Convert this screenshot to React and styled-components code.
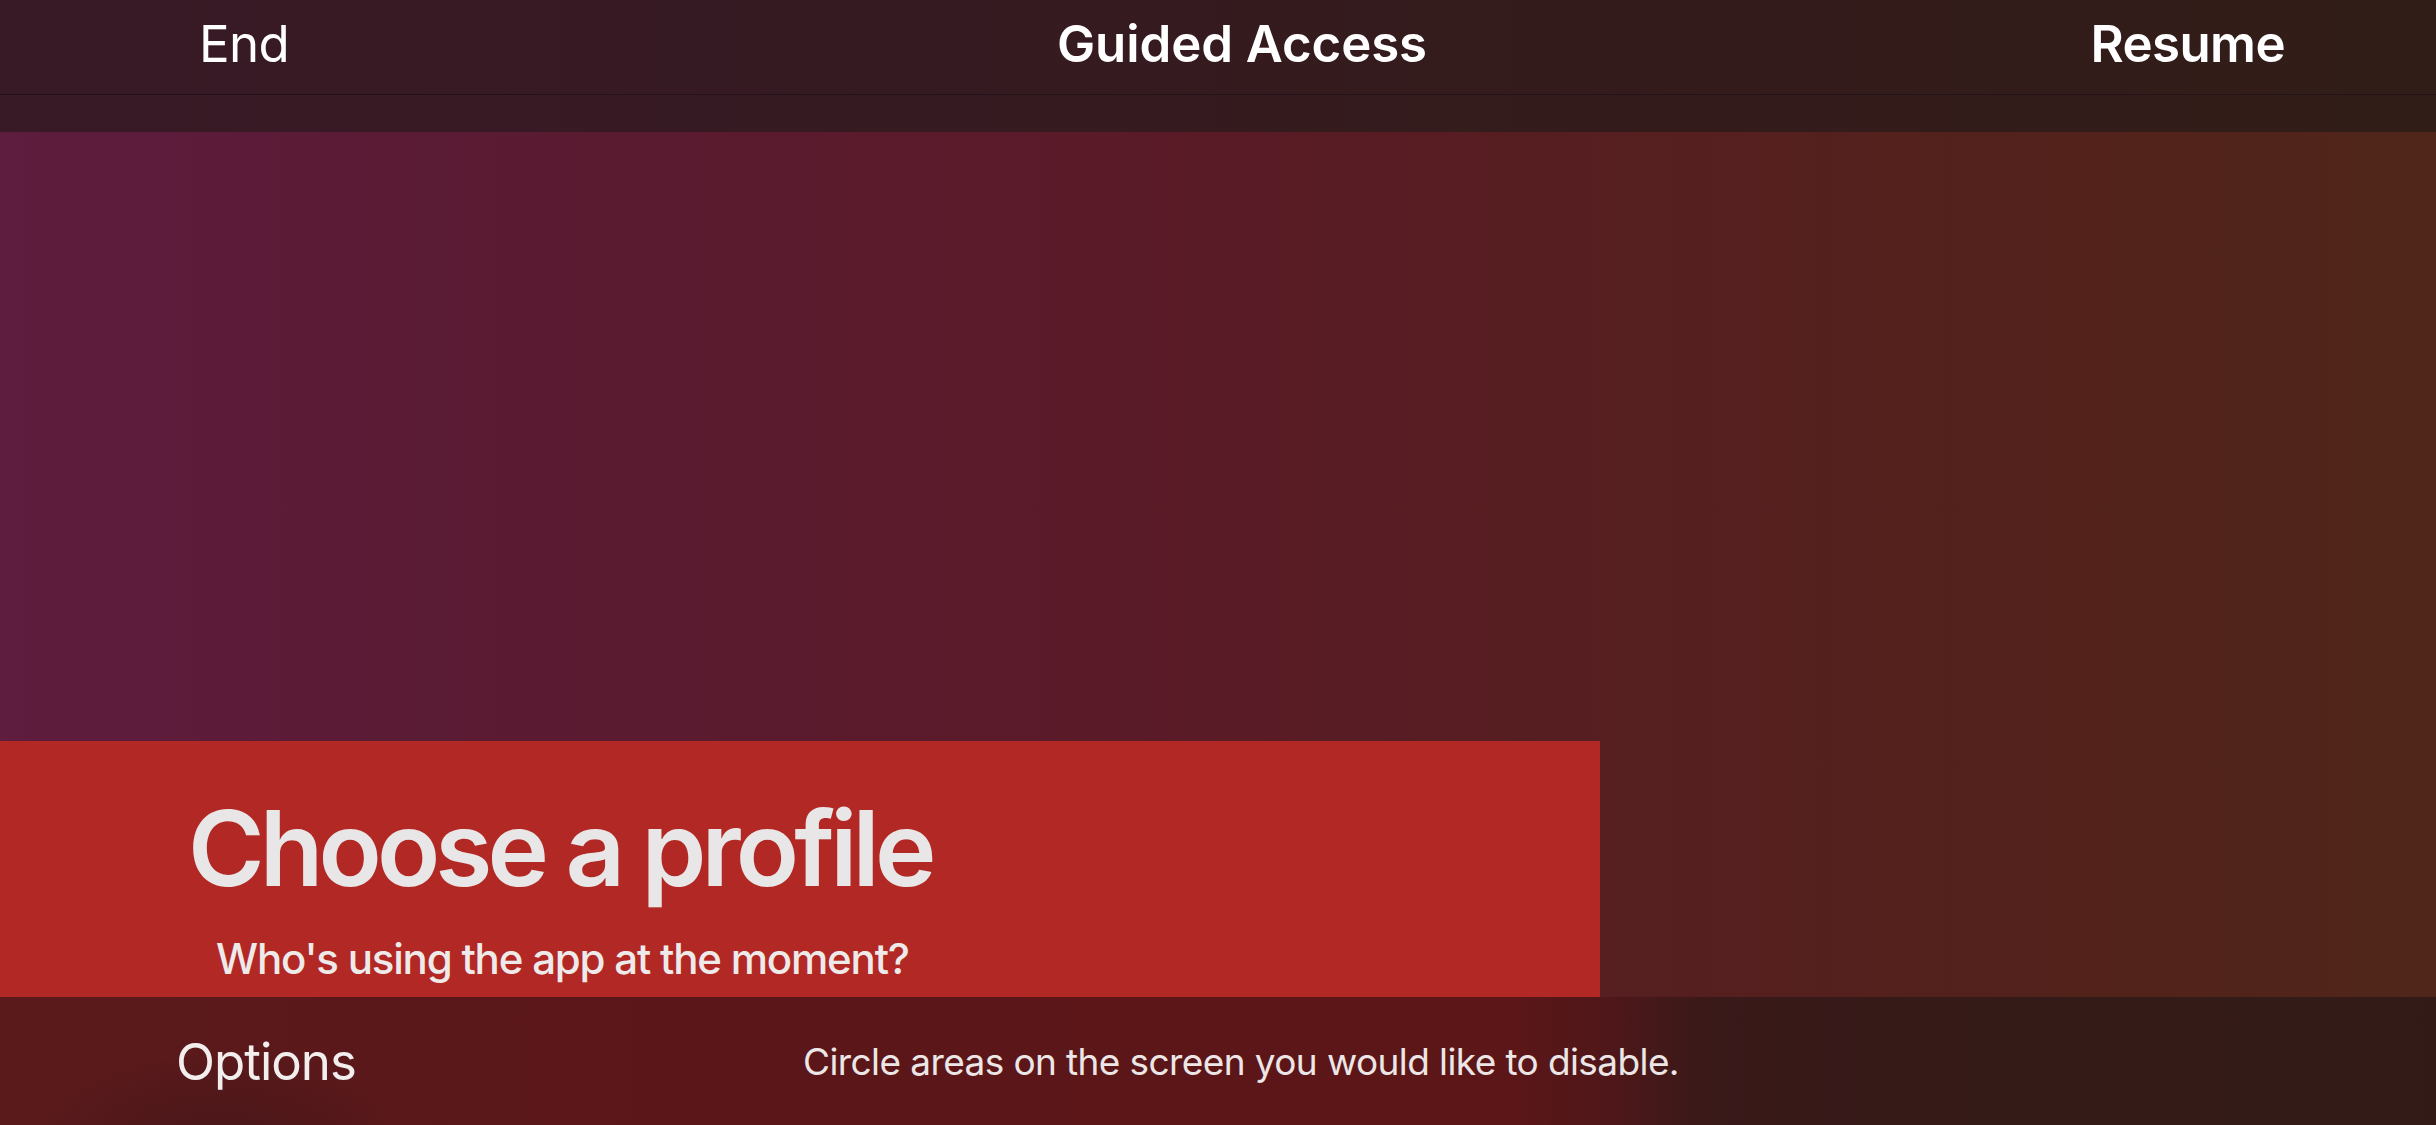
import styled, { createGlobalStyle } from "styled-components";

const GlobalStyle = createGlobalStyle`
    html, body {
        margin: 0;
        padding: 0;
        background: #2f1a1c;
    }
    body {
        font-family: Inter, "Noto Sans", "Liberation Sans", sans-serif;
        -webkit-font-smoothing: antialiased;
    }
`;

const Screen = styled.div`
    width: 2436px;
    height: 1125px;
    overflow: hidden;
    display: flex;
    flex-direction: column;
    background: linear-gradient(90deg, #5e1c3e 0%, #5a1b33 20%, #5a1a28 45%, #561e20 65%, #52221b 85%, #50261a 100%);
`;

const Header = styled.header`
    flex: 0 0 132px;
    display: flex;
    flex-direction: column;
    background: linear-gradient(90deg, #381a26 0%, #361a22 35%, #341b1c 60%, #311d18 100%);
`;

const NavRow = styled.div`
    height: 95px;
    box-sizing: border-box;
    padding: 0 151px 8px 199px;
    border-bottom: 1px solid #24121a;
    display: grid;
    grid-template-columns: 1fr auto 1fr;
    align-items: center;
`;

const NavButton = styled.span`
    font-size: 51px;
    font-weight: ${props => props.bold ? 600 : 400};
    color: #ffffff;
    letter-spacing: -0.6px;
    justify-self: ${props => props.end ? "end" : "start"};
`;

const NavTitle = styled.span`
    font-size: 51px;
    font-weight: 600;
    color: #ffffff;
    letter-spacing: -0.1px;
`;

const Content = styled.main`
    flex: 1;
    display: flex;
    flex-direction: column;
    justify-content: flex-end;
`;

const ProfilePanel = styled.section`
    width: 1600px;
    height: 256px;
    box-sizing: border-box;
    padding: 44px 0 0 188px;
    background: #b22824;
    overflow: hidden;
`;

const Title = styled.h1`
    margin: 0;
    font-size: 104px;
    line-height: 126px;
    font-weight: 600;
    color: #e8e6e6;
    letter-spacing: -4.9px;
`;

const Subtitle = styled.p`
    margin: 23px 0 0 28px;
    font-size: 42px;
    line-height: 50px;
    font-weight: 500;
    color: #eeeaea;
    letter-spacing: -1.2px;
`;

const BottomBar = styled.footer`
    flex: 0 0 128px;
    display: grid;
    grid-template-columns: 1fr auto 1fr;
    align-items: center;
    padding: 0 130px 0 176px;
    background:
        radial-gradient(ellipse 260px 120px at 220px 140px, rgba(40, 20, 20, 0.35), rgba(40, 20, 20, 0) 70%),
        linear-gradient(90deg, #5a1a1c 0%, #5b1619 30%, #5c1618 62%, #4f1719 66%, #3a1919 70%, #351a18 78%, #321b17 100%);
`;

const OptionsButton = styled.span`
    font-size: 51px;
    color: #f2eeee;
    letter-spacing: -1px;
`;

const Hint = styled.span`
    font-size: 37px;
    color: #ece6e6;
    letter-spacing: -0.6px;
`;

export default function App() {
    return (
        <>
            <GlobalStyle />
            <Screen>
                <Header>
                    <NavRow>
                        <NavButton>End</NavButton>
                        <NavTitle>Guided Access</NavTitle>
                        <NavButton bold end>Resume</NavButton>
                    </NavRow>
                </Header>
                <Content>
                    <ProfilePanel>
                        <Title>Choose a profile</Title>
                        <Subtitle>Who's using the app at the moment?</Subtitle>
                    </ProfilePanel>
                </Content>
                <BottomBar>
                    <OptionsButton>Options</OptionsButton>
                    <Hint>Circle areas on the screen you would like to disable.</Hint>
                    <span />
                </BottomBar>
            </Screen>
        </>
    );
}
